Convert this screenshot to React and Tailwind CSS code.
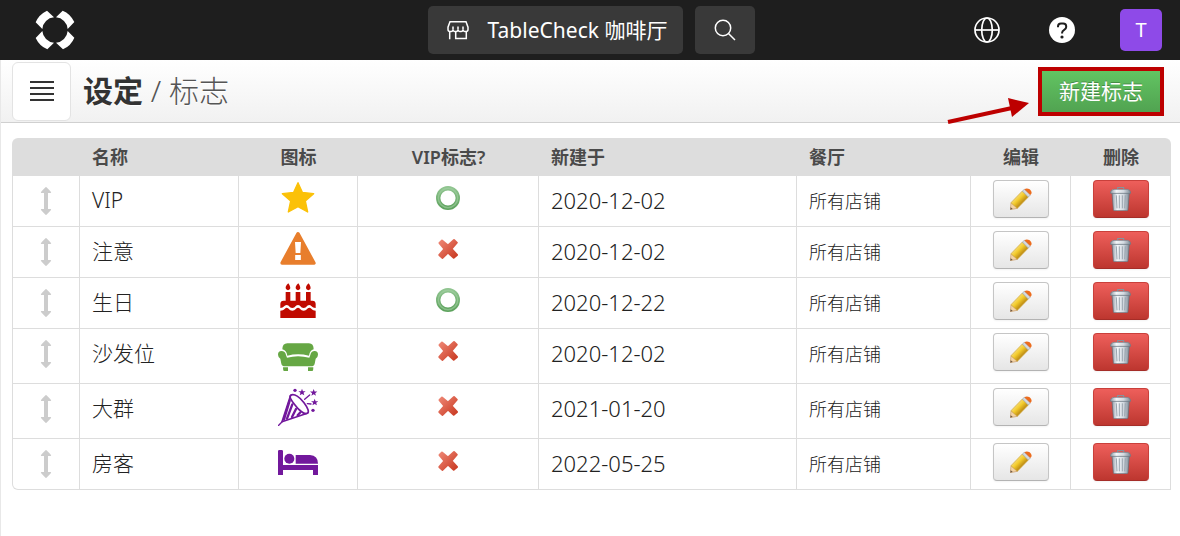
import React from "react";

const flags = [
  { name: "VIP", icon: "star", vip: true, date: "2020-12-02", height: "h-[51px]" },
  { name: "注意", icon: "warning", vip: false, date: "2020-12-02", height: "h-[51px]" },
  { name: "生日", icon: "cake", vip: true, date: "2020-12-22", height: "h-[51px]" },
  { name: "沙发位", icon: "sofa", vip: false, date: "2020-12-02", height: "h-[55px]" },
  { name: "大群", icon: "party", vip: false, date: "2021-01-20", height: "h-[55px]" },
  { name: "房客", icon: "bed", vip: false, date: "2022-05-25", height: "h-[51px]" },
];

function Gradients() {
  return (
    <svg className="absolute h-0 w-0" aria-hidden="true">
      <defs>
        <linearGradient id="ring" x1="0" y1="0" x2="0" y2="1">
          <stop offset="0" stopColor="#8fc48f" />
          <stop offset="1" stopColor="#5ea35e" />
        </linearGradient>
        <linearGradient id="cross" x1="0" y1="0" x2="1" y2="1">
          <stop offset="0" stopColor="#ee8674" />
          <stop offset="1" stopColor="#c93a22" />
        </linearGradient>
        <linearGradient id="pencil" gradientUnits="userSpaceOnUse" x1="18" y1="26" x2="36" y2="44">
          <stop offset="0" stopColor="#f6dc72" />
          <stop offset="0.45" stopColor="#f3cb2c" />
          <stop offset="1" stopColor="#c08f16" />
        </linearGradient>
        <linearGradient id="can" x1="0" y1="0" x2="1" y2="0">
          <stop offset="0" stopColor="#8e9aa6" />
          <stop offset="0.3" stopColor="#f2f5f8" />
          <stop offset="0.65" stopColor="#d3dae1" />
          <stop offset="1" stopColor="#7d8995" />
        </linearGradient>
      </defs>
    </svg>
  );
}

function Logo() {
  return (
    <svg viewBox="0 0 120 120" className="h-10 w-10" fill="#fff" aria-hidden="true">
      {[0, 90, 180, 270].map((a) => (
        <path key={a} transform={`rotate(${a} 60 60)`} d="M83 2 Q106 11 118 36 L98 57 A38 38 0 0 0 63 22 Z" />
      ))}
    </svg>
  );
}

function StoreIcon() {
  return (
    <svg viewBox="0 0 24 24" className="h-6 w-6" fill="none" stroke="#fff" strokeWidth="1.5" aria-hidden="true">
      <path d="M4 3.700h16l2 5.500v2.300a2 2 0 0 1-2 2h-.9a2 2 0 0 1-2.100-2 2 2 0 0 1-2 2h-.9a2 2 0 0 1-2.100-2 2 2 0 0 1-2 2h-.9a2 2 0 0 1-2.100-2 2 2 0 0 1-2 2h-1a2 2 0 0 1-2-2V9.200z" />
      <path d="M7 8.500v3M12 8.500v3M17 8.500v3M3.700 13.500v7.800M20.300 13.500v7.100H9.700v-7" />
    </svg>
  );
}

function SearchIcon() {
  return (
    <svg viewBox="0 0 24 24" className="h-6 w-6" fill="none" stroke="#fff" strokeWidth="1.5" aria-hidden="true">
      <circle cx="10" cy="10" r="7.700" />
      <path d="M15.500 15.500 22 22" />
    </svg>
  );
}

function GlobeIcon() {
  return (
    <svg viewBox="0 0 26 26" className="h-[26px] w-[26px]" fill="none" stroke="#fff" strokeWidth="1.700" aria-hidden="true">
      <circle cx="13" cy="13" r="12" />
      <ellipse cx="13" cy="13" rx="5.300" ry="12" />
      <path d="M1 13h24" />
    </svg>
  );
}

function HelpIcon() {
  return (
    <svg viewBox="0 0 26 26" className="h-[26px] w-[26px]" aria-hidden="true">
      <circle cx="13" cy="13" r="13" fill="#fff" />
      <path d="M9 10.300V9.600a3 3 0 0 1 3-3h2.200a3 3 0 0 1 3 3v.4c0 1.500-.8 2.200-2 2.900-1.400.8-2.100 1.300-2.100 2.800v.8" fill="none" stroke="#1e1e1e" strokeWidth="2" />
      <circle cx="13" cy="20" r="1.600" fill="#1e1e1e" />
    </svg>
  );
}

function DragIcon() {
  return (
    <svg viewBox="0 0 12 28" className="h-7 w-3" fill="#ccc" aria-hidden="true">
      <path d="M6 0 Q6.500 0 11 5 Q11.500 6 10.500 6 H8 V22 H10.500 Q11.500 22 11 23 Q6.500 28 6 28 Q5.500 28 1 23 Q.5 22 1.500 22 H4 V6 H1.500 Q.5 6 1 5 Q5.500 0 6 0Z" />
    </svg>
  );
}

const star = "0,-11 2.800,-3.500 11,-3.400 4.600,1.600 6.800,9 0,4.800 -6.800,9 -4.600,1.600 -11,-3.400 -2.800,-3.500";

const drawings = {
  star: (
    <path
      fill="#fbc108"
      stroke="#fbc108"
      strokeWidth="4"
      strokeLinejoin="round"
      d="M60 14 L73 43 L107 47 L82 69 L89 102 L60 86 L31 102 L38 69 L13 47 L47 43Z"
    />
  ),
  warning: (
    <>
      <path fill="#e87e2c" stroke="#e87e2c" strokeWidth="10" strokeLinejoin="round" d="M60 14 L108 102 H12Z" />
      <path fill="#fff" d="M51 39 H69 L67 72 H53Z M51.500 78 H68.500 V93 H51.500Z" />
    </>
  ),
  cake: (
    <g fill="#c00a00">
      {[30, 60, 91].map((x) => (
        <g key={x}>
          <path d={`M${x + 1} 10 Q${x + 9} 22 ${x + 6} 27 Q${x} 34 ${x - 6} 27 Q${x - 10} 20 ${x + 1} 10Z`} />
          <path d={`M${x - 7} 36 h14 v30 h-14z`} />
        </g>
      ))}
      <path d="M7 84 V72 Q7 62 17 62 H103 Q113 62 113 72 V84 C101 84 101 75 94 75 C85 75 87 84 77 84 C67 84 69 75 60 75 C51 75 53 84 43 84 C33 84 35 75 26 75 C18 75 18 84 7 84Z" />
      <path d="M7 92 C20 92 20 83 26 83 C33 83 33 92 43 92 C53 92 53 83 60 83 C67 83 67 92 77 92 C87 92 87 83 94 83 C101 83 101 92 113 92 V114 H7Z" />
    </g>
  ),
  sofa: (
    <g fill="#66a744">
      <path d="M13 55 Q13 37 28 37 H93 Q107 37 107 55 Q96 57 93 74 Q60 66 28 74 Q25 57 13 55Z" />
      <path d="M10 60 Q22 60 24 72 L27 80 Q60 71 94 80 L97 72 Q99 60 110 60 Q120 60 120 71 Q120 78 113 83 L110 98 Q108 106 99 106 H21 Q12 106 10 98 L7 83 Q0 78 0 71 Q0 60 10 60Z" />
      <path d="M15 109 H30 V120 H18 Q15 120 15 109Z M90 109 H106 Q106 120 103 120 H90Z" />
    </g>
  ),
  party: (
    <g fill="none" stroke="#72189c" strokeWidth="5" strokeLinecap="round" strokeLinejoin="round">
      <path d="M1 119 L14 106" strokeWidth="4" />
      <path d="M38 28 L12 107 L88 82" />
      <path d="M38 28 C48 20 67 35 78 50 C91 67 94 79 88 82 C78 86 62 72 51 57 C39 42 33 32 38 28Z" />
      <path d="M35 44 L18 100 M43 55 L27 98 M54 69 L42 93 M66 80 L59 88" strokeWidth="7" />
      <path d="M80 40 L95 27 M88 53 L99 54" strokeWidth="4" />
      <g fill="#72189c" stroke="none">
        <polygon points={star} transform="translate(72 19)" />
        <polygon points={star} transform="translate(107 20)" />
        <polygon points={star} transform="translate(110 49)" />
        <circle cx="51" cy="13" r="5" />
        <circle cx="105" cy="73" r="5" />
      </g>
    </g>
  ),
  bed: (
    <g fill="#72189c">
      <path d="M0 31 Q0 27 4 27 H11 Q15 27 15 31 V72 H120 V102 H105 V87 H15 V102 H0Z" />
      <circle cx="34" cy="53" r="15" />
      <path d="M53 42 H96 Q120 44 120 68 H53Z" />
    </g>
  ),
};

function FlagIcon({ name }) {
  return (
    <svg viewBox="0 0 120 120" className="mx-auto h-10 w-10" role="img" aria-label={name}>
      {drawings[name]}
    </svg>
  );
}

function RingIcon() {
  return (
    <svg viewBox="0 0 24 24" className="mx-auto h-6 w-6" fill="none" role="img" aria-label="是">
      <circle cx="12" cy="12" r="9.800" stroke="url(#ring)" strokeWidth="4.400" />
      <circle cx="12" cy="12" r="9.700" stroke="#a3d0a3" strokeWidth="1.400" opacity=".6" />
    </svg>
  );
}

function CrossIcon() {
  return (
    <svg viewBox="0 0 24 24" className="mx-auto h-6 w-6" role="img" aria-label="否">
      <path
        fill="url(#cross)"
        stroke="url(#cross)"
        strokeWidth="2"
        strokeLinejoin="round"
        d="M6 3.500 L12 8.500 L18 3 L20.800 5.700 L15.500 11.900 L21 18 L17.700 20.800 L12 15.600 L6.300 20.900 L3.300 18 L8.500 12 L3.500 6Z"
      />
    </svg>
  );
}

function PencilIcon() {
  return (
    <svg viewBox="0 0 66 66" className="h-[22px] w-[22px]" aria-hidden="true">
      <path d="M1 65 L3 44 L22 61Z" fill="#f3d3a6" stroke="#c59a66" strokeWidth="2" />
      <path d="M1 65 L2 58 L8 62Z" fill="#6c5847" />
      <path d="M3 44 L37 9 L55 27 L22 61Z" fill="url(#pencil)" stroke="#cfa53a" strokeWidth="2" />
      <path d="M37 9 L43 4 L61 21 L55 27Z" fill="#d5dade" stroke="#9da4a9" strokeWidth="2" />
      <path d="M43 4 Q50 -1 59 4 Q67 11 64 17 L61 21Z" fill="#ec6c1e" />
    </svg>
  );
}

function TrashIcon() {
  return (
    <svg viewBox="0 0 63 72" className="h-6 w-[21px]" aria-hidden="true">
      <path d="M23 8 V3 Q23 1 26 1 H38 Q41 1 41 3 V8" fill="none" stroke="#87929c" strokeWidth="4" />
      <path d="M6 18 H58 L54 68 Q54 71 50 71 H14 Q10 71 10 68Z" fill="url(#can)" stroke="#5f6b76" strokeWidth="2" />
      <path d="M19 25 L21 64 M28 25 V64 M37 25 V64 M46 25 L44 64" stroke="#9aa5af" strokeWidth="3" />
      <path d="M1 19 Q1 8 12 7 H52 Q62 8 62 19Z" fill="url(#can)" stroke="#6d7984" strokeWidth="2" />
    </svg>
  );
}

function TopBar() {
  return (
    <header className="grid h-15 grid-cols-[1fr_auto_1fr] items-center bg-[#1e1e1e] pr-[18px] pl-[21px] text-white">
      <a href="#home" aria-label="TableCheck" className="ml-3.5 w-10">
        <Logo />
      </a>
      <div className="flex gap-3">
        <button className="flex h-12 items-center gap-[18px] rounded-[5px] bg-[#393939] pr-4 pl-[18px] text-[21px] leading-7 whitespace-nowrap">
          <StoreIcon />
          <span>TableCheck 咖啡厅</span>
        </button>
        <button aria-label="搜索" className="flex h-12 w-15 items-center justify-center rounded-[5px] bg-[#393939]">
          <SearchIcon />
        </button>
      </div>
      <div className="flex items-center justify-end">
        <button aria-label="语言" className="mr-[49px]">
          <GlobeIcon />
        </button>
        <button aria-label="帮助" className="mr-[45px]">
          <HelpIcon />
        </button>
        <button className="h-[42px] w-[42px] rounded-[5px] bg-[#8e4ae8] text-xl">T</button>
      </div>
    </header>
  );
}

function TitleBar() {
  return (
    <div className="flex h-[63px] items-center border-b border-[#d0d0d0] bg-linear-to-b from-white to-[#f1f1f1] pr-4 pl-[11px]">
      <button
        aria-label="菜单"
        className="flex h-[59px] w-[59px] flex-col items-center justify-center gap-1 rounded-md border border-[#e3e3e3] bg-white"
      >
        {[0, 1, 2, 3].map((i) => (
          <span key={i} className="h-[2px] w-6 bg-[#333]" />
        ))}
      </button>
      <h1 className="ml-3 text-[30px] leading-10 text-[#555] [text-shadow:0_1px_0_#fff]">
        <strong className="font-bold text-[#333]">设定</strong>
        <span className="font-light"> / 标志</span>
      </h1>
      <div className="relative ml-auto">
        <svg viewBox="0 0 84 30" className="absolute top-7 right-full mr-2 h-[30px] w-[84px]" aria-hidden="true">
          <path d="M2 27 L66 13" stroke="#bd0000" strokeWidth="4" />
          <path d="M62 3 L83 8 L66 22Z" fill="#bd0000" />
        </svg>
        <button className="h-[49px] border-4 border-[#bd0000] bg-linear-to-b from-[#62c462] to-[#51a351] px-[17px] text-[21px] leading-7 whitespace-nowrap text-white [text-shadow:0_-1px_0_rgba(0,0,0,0.25)]">
          新建标志
        </button>
      </div>
    </div>
  );
}

const th = "bg-[#ddd] px-3 text-[18px] leading-6 font-semibold text-[#4a4a4a] whitespace-nowrap";
const td = "border-r border-b border-[#ddd] align-top";

function FlagTable() {
  return (
    <table className="w-full table-fixed border-separate border-spacing-0 text-[#222]">
      <colgroup>
        <col className="w-[68px]" />
        <col className="w-[159px]" />
        <col className="w-[119px]" />
        <col className="w-[181px]" />
        <col className="w-[258px]" />
        <col className="w-[174px]" />
        <col className="w-[100px]" />
        <col className="w-[100px]" />
      </colgroup>
      <thead>
        <tr className="h-[38px]">
          <th className={th + " rounded-tl-md"} aria-label="排序" />
          <th className={th + " text-left"}>名称</th>
          <th className={th}>图标</th>
          <th className={th}>VIP标志?</th>
          <th className={th + " text-left"}>新建于</th>
          <th className={th + " text-left"}>餐厅</th>
          <th className={th}>编辑</th>
          <th className={th + " rounded-tr-md"}>删除</th>
        </tr>
      </thead>
      <tbody className="[&>tr:last-child>td:first-child]:rounded-bl-md">
        {flags.map((flag) => (
          <tr key={flag.name} className={flag.height}>
            <td className={td + " border-l pt-[11px]"}>
              <div className="flex justify-center">
                <DragIcon />
              </div>
            </td>
            <td className={td + " px-3 pt-[10px] text-[21px] leading-7 font-light"}>{flag.name}</td>
            <td className={td + " pt-[2px]"}>
              <FlagIcon name={flag.icon} />
            </td>
            <td className={td + " pt-[10px]"}>{flag.vip ? <RingIcon /> : <CrossIcon />}</td>
            <td className={td + " px-3 pt-[10px] text-[22px] leading-7 font-light"}>{flag.date}</td>
            <td className={td + " px-3 pt-[11px] text-[18px] leading-7 font-light"}>所有店铺</td>
            <td className={td + " pt-1"}>
              <button
                aria-label={"编辑 " + flag.name}
                className="mx-auto flex h-[38px] w-14 items-center justify-center rounded border border-[#c5c5c5] border-b-[#b3b3b3] bg-linear-to-b from-white to-[#e6e6e6] shadow-xs"
              >
                <PencilIcon />
              </button>
            </td>
            <td className={td + " pt-1"}>
              <button
                aria-label={"删除 " + flag.name}
                className="mx-auto flex h-[38px] w-14 items-center justify-center rounded border border-[#c9403b] border-b-[#a52d28] bg-linear-to-b from-[#ee5f5b] to-[#bd362f] shadow-xs"
              >
                <TrashIcon />
              </button>
            </td>
          </tr>
        ))}
      </tbody>
    </table>
  );
}

export default function App() {
  return (
    <div className="flex min-h-screen flex-col bg-white font-['Noto_Sans','Noto_Sans_CJK_SC',sans-serif]" lang="zh-CN">
      <Gradients />
      <TopBar />
      <main className="grow border-l border-[#e8e8e8]">
        <TitleBar />
        <div className="pt-[15px] pr-[9px] pb-6 pl-[11px]">
          <FlagTable />
        </div>
      </main>
    </div>
  );
}
